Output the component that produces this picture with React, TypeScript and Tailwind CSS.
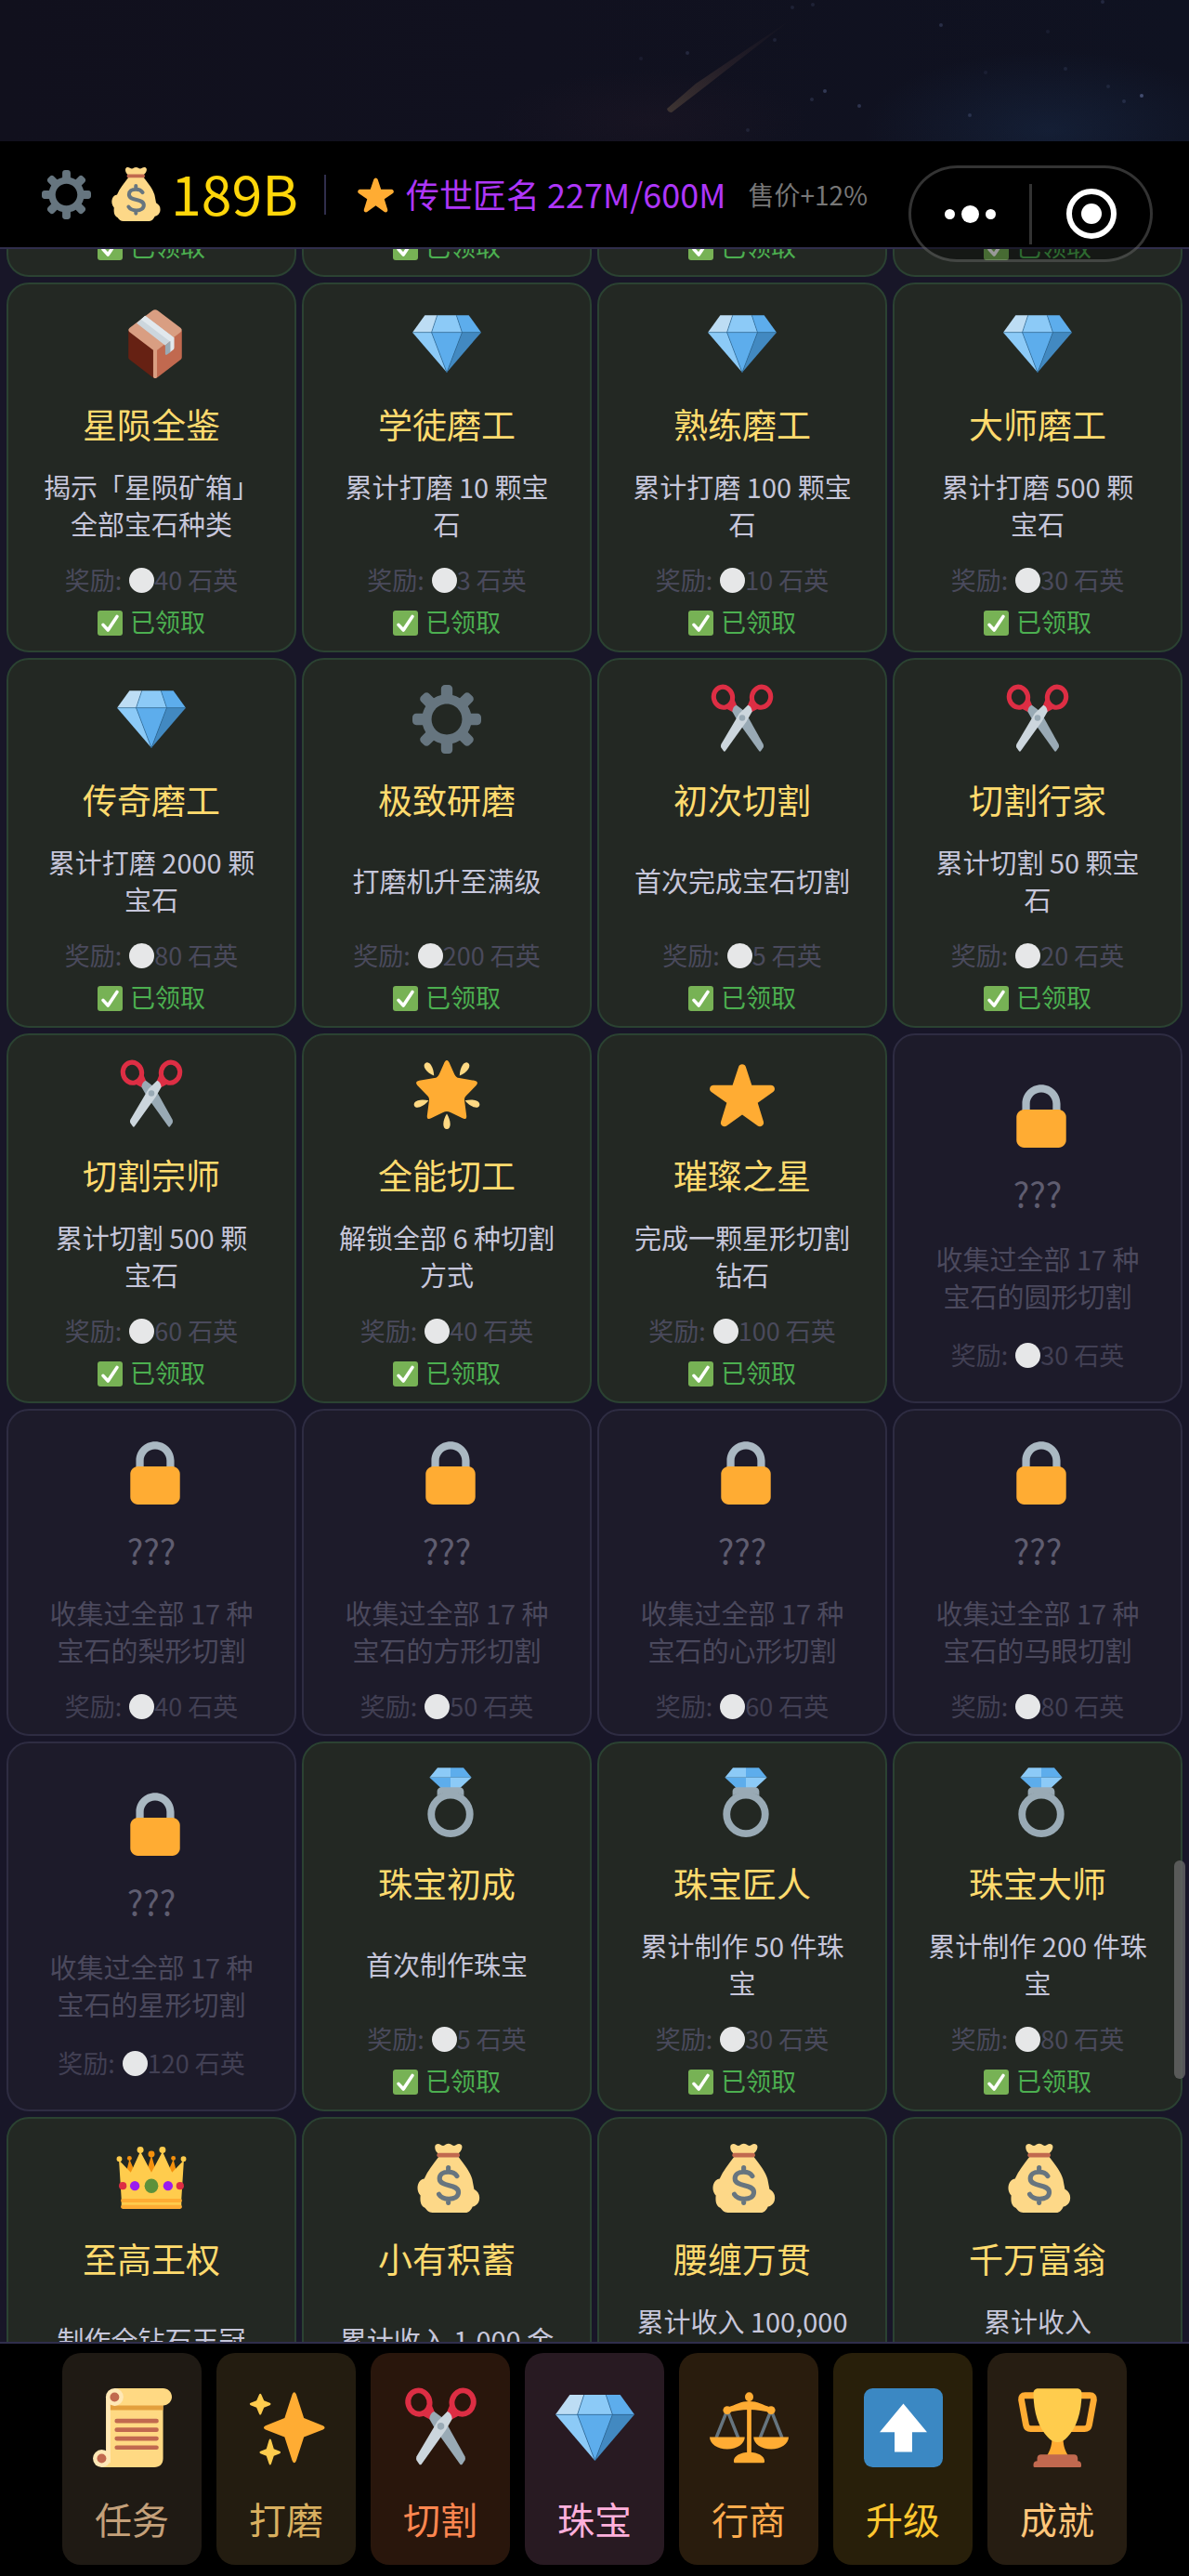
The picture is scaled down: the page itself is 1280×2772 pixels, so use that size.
import type { ReactNode } from 'react';

/* ---------- icons, all drawn on a 36 x 36 grid ---------- */

const Svg = ({ children }: { children: ReactNode }) => (
  <svg viewBox="0 0 36 36" className="block h-full w-full overflow-visible" aria-hidden="true">
    {children}
  </svg>
);

const Gear = () => (
  <Svg>
    <path
      fill="#66757F"
      d="M34 15h-3.362c-.324-1.369-.864-2.651-1.582-3.814l2.379-2.379c.781-.781.781-2.048 0-2.829l-1.414-1.414c-.781-.781-2.047-.781-2.828 0l-2.379 2.379C23.65 6.225 22.369 5.686 21 5.362V2c0-1.104-.896-2-2-2h-2c-1.104 0-2 .896-2 2v3.362c-1.369.324-2.651.864-3.814 1.582L8.808 4.565c-.781-.781-2.048-.781-2.828 0L4.565 5.979c-.781.781-.781 2.048-.001 2.829l2.379 2.379C6.225 12.35 5.686 13.632 5.362 15H2c-1.104 0-2 .896-2 2v2c0 1.104.896 2 2 2h3.362c.324 1.368.864 2.65 1.582 3.813l-2.379 2.379c-.78.78-.78 2.048.001 2.829l1.414 1.414c.78.78 2.047.78 2.828 0l2.379-2.379c1.163.719 2.445 1.258 3.814 1.582V34c0 1.104.896 2 2 2h2c1.104 0 2-.896 2-2v-3.362c1.368-.324 2.65-.864 3.813-1.582l2.379 2.379c.781.781 2.047.781 2.828 0l1.414-1.414c.781-.781.781-2.048 0-2.829l-2.379-2.379c.719-1.163 1.258-2.445 1.582-3.814H34c1.104 0 2-.896 2-2v-2C36 15.896 35.104 15 34 15zM18 26c-4.418 0-8-3.582-8-8s3.582-8 8-8 8 3.582 8 8-3.582 8-8 8z"
    />
  </Svg>
);

const Star = () => (
  <Svg>
    <path
      fill="#FFAC33"
      d="M27.287 34.627c-.404 0-.806-.124-1.152-.371L18 28.422l-8.135 5.834a1.97 1.97 0 0 1-1.151.371c-.409 0-.81-.127-1.143-.37a1.967 1.967 0 0 1-.711-2.193l3.034-9.792-8.063-5.681a1.976 1.976 0 0 1-.708-2.203 1.978 1.978 0 0 1 1.866-1.363L12.947 13l3.179-9.549a1.976 1.976 0 0 1 3.749 0L23 13l10.036.015a1.975 1.975 0 0 1 1.159 3.566l-8.062 5.681 3.034 9.792a1.97 1.97 0 0 1-1.88 2.573z"
    />
  </Svg>
);

const Gem = () => (
  <Svg>
    <path fill="#BDDDF4" d="M6.5 3H13l-3 9H0z" />
    <path fill="#8CCAF7" d="M13 3h10l3 9H10z" />
    <path fill="#5DADEC" d="M23 3h6.5L36 12H26z" />
    <path fill="#8CCAF7" d="M0 12h10l8 21z" />
    <path fill="#5DADEC" d="M10 12h16l-8 21z" />
    <path fill="#4289C1" d="M26 12h10L18 33z" />
    <path fill="none" stroke="#2A6797" strokeWidth=".3" d="M0 12h36M13 3l-3 9 8 21 8-21-3-9" />
  </Svg>
);

const Scissors = () => (
  <Svg>
    <g fill="none" stroke="#DD2E44" strokeWidth="2.5">
      <ellipse cx="8" cy="6.4" rx="4.9" ry="5.4" transform="rotate(-14 8 6.4)" />
      <ellipse cx="28" cy="6.4" rx="4.9" ry="5.4" transform="rotate(14 28 6.4)" />
    </g>
    <path fill="#DD2E44" d="M12 3.2l3.2 7.6-2.2 3.4-3.6-1.9c2-1 3.2-2.800 3.400-5z" />
    <path fill="#DD2E44" d="M24 3.200l-3.200 7.600 2.200 3.400 3.600-1.900c-2-1-3.200-2.800-3.400-5z" />
    <path fill="#99AAB5" d="M15 10.600c-1.200.4-2 1.600-2.200 3.400l3 5.200 11 15.400c.3.400.8.300 1 0l1.200-1.800c.3-.5.200-1.300 0-1.800L19.500 14z" />
    <path fill="#CCD6DD" d="M21 10.600c1.200.4 2 1.600 2.200 3.400l-3 5.200-11 15.400c-.3.400-.8.300-1 0L7 32.800c-.3-.5-.2-1.300 0-1.800L16.500 15z" />
    <circle cx="18" cy="17.300" r="1.600" fill="#99AAB5" />
  </Svg>
);

const ray = 'M18 28c1 1.600 1.800 3.600 1.800 5.400 0 1.700-.8 2.600-1.800 2.600s-1.800-.9-1.800-2.600c0-1.800.8-3.800 1.800-5.400z';

const GlowStar = () => (
  <Svg>
    <g fill="#FFD983">
      <path d={ray} />
      <path d={ray} transform="rotate(72 18 18)" />
      <path d={ray} transform="rotate(-72 18 18)" />
      <path d={ray} transform="rotate(146 18 18) translate(0 2)" />
      <path d={ray} transform="rotate(-146 18 18) translate(0 2)" />
    </g>
    <path
      fill="#FFAC33"
      d="M18 0c.7 0 1.200.9 1.500 1.700l2.500 5.600c.5 1.200 1.300 1.800 2.500 2l7.900 1.300c1.700.3 2.100 1.300 1 2.500l-5.200 5.400c-.9.9-1.100 1.700-.9 2.800l1 7.700c.200 1.700-.8 2.100-2.100 1.300l-6.300-3.100c-1.200-.6-2.600-.6-3.800 0l-6.300 3.100c-1.300.8-2.300.4-2.100-1.300l1-7.700c.2-1.100 0-1.900-.9-2.800l-5.200-5.400c-1.100-1.200-.7-2.200 1-2.500l7.900-1.300c1.200-.2 2-.8 2.500-2l2.500-5.600C16.800.9 17.300 0 18 0z"
    />
  </Svg>
);

const Lock = () => (
  <Svg>
    <path fill="#AAB8C2" d="M18 3C12.477 3 8 7.477 8 13v10h4V13c0-3.313 2.686-6 6-6s6 2.687 6 6v10h4V13c0-5.523-4.477-10-10-10z" />
    <path fill="#FFAC33" d="M31 32c0 2.209-1.791 4-4 4H9c-2.209 0-4-1.791-4-4V20c0-2.209 1.791-4 4-4h18c2.209 0 4 1.791 4 4v12z" />
  </Svg>
);

const Box = () => (
  <Svg>
    <path fill="#662113" d="M4 11l14 10.500V36c-.5 0-.9-.2-1.300-.5L4.800 26.400c-.5-.4-.8-.9-.8-1.500z" />
    <path fill="#C1694F" d="M32 11L18 21.500V36c.5 0 .9-.2 1.300-.5l11.900-9.100c.5-.4.8-.9.8-1.500z" />
    <path fill="#D99E82" d="M16.600.6c.9-.7 1.900-.7 2.800 0l11.900 9c.9.700.9 1.600 0 2.300L19 21.300V35c0 .6-.4 1-1 1s-1-.4-1-1V21.300L4.700 11.900c-.9-.7-.9-1.600 0-2.300z" />
    <path fill="#CCD6DD" d="M8.300 7.200l4.500-3.900 15.200 11.500-4.700 4z" />
    <path fill="#E1E8ED" d="M10.600 5.200l2.200-1.900L28 14.800V20c0 .5-.2.900-.6 1.200l-1.600 1.200v-5.600z" />
    <path fill="#99AAB5" d="M23.300 18.800l2.700-2.200v5.800l-1.700 1.200c-.6.400-1 .1-1-.5z" />
  </Svg>
);

const Ring = () => (
  <Svg>
    <circle cx="18" cy="24" r="10.100" fill="none" stroke="#99AAB5" strokeWidth="3.800" />
    <path fill="#8CCAF7" d="M11.200-.4H18V4.700H7z" />
    <path fill="#5DADEC" d="M18-.4h6.800L29 4.700H18z" />
    <path fill="#5DADEC" d="M7 4.700h11V10.500h-4.800z" />
    <path fill="#8CCAF7" d="M18 4.700h11l-6.200 5.800H18z" />
    <path fill="#99AAB5" d="M13.500 9.800h9c1.500 0 2.500 1 2.500 2.300v2.100c-4-2.200-10-2.200-14 0v-2.100c0-1.300 1-2.300 2.500-2.300z" />
  </Svg>
);

const Crown = () => (
  <Svg>
    <g fill="#F4900C">
      <path d="M6.500 8l3 7-5 1zM29.500 8l-3 7 5 1zM18 6l3.500 12h-7z" />
      <circle cx="6.500" cy="7.500" r="1.200" />
      <circle cx="29.500" cy="7.500" r="1.200" />
      <circle cx="18" cy="5.300" r="1.700" />
    </g>
    <path fill="#FFCC4D" d="M1 8.500L7.200 15 12.200 4 18 15l5.800-11 5 11L35 8.500 33.700 29v4.500H2.300V29z" />
    <g fill="#FFCC4D">
      <circle cx="1.200" cy="7.900" r="1.400" />
      <circle cx="34.800" cy="7.900" r="1.400" />
      <circle cx="12.200" cy="3.200" r="1.700" />
      <circle cx="23.800" cy="3.200" r="1.700" />
    </g>
    <rect x="2" y="28.700" width="32" height="2" rx="1" fill="#FFAC33" />
    <rect x="2" y="32" width="32" height="2" rx="1" fill="#FFAC33" />
    <ellipse cx="18" cy="22" rx="3.600" ry="3.800" fill="#5C913B" />
    <circle cx="9.300" cy="22" r="2.500" fill="#9B1CF0" />
    <circle cx="26.700" cy="22" r="2.500" fill="#9B1CF0" />
    <circle cx="3" cy="22" r="2" fill="#DD2E44" />
    <circle cx="33" cy="22" r="2" fill="#DD2E44" />
  </Svg>
);

const Bag = () => (
  <Svg>
    <path
      fill="#FDD888"
      d="M14 6.500h9.800c4 5 6.500 8.500 7.500 12l1 5.200c1.800 1 2.900 2.600 2.800 4.600 0 2.400-1.600 4.200-3.600 4.500-.9 1.900-2 3.200-3.700 3.200H10.500c-2 0-2.700-1-4-2.500C4.300 32.500 3.900 30 4.200 27 2.700 25.400 2.300 23 3 21c.5-1.500 1.800-2.600 3.200-2.700C8 14 10.800 10.800 14 6.500z"
    />
    <path fill="#FDD888" d="M13.400 5C12 3.700 11.700 2.500 11.800 1.300 12-.1 13.800-.3 14.800.5c1 .6 1.800.6 2.700-.2.8-.5 1.900-.5 2.700 0 .9.700 1.700.9 2.700.2 1.100-.8 2.900-.6 3.100.8.100 1.200-.5 2.400-1.900 3.700z" />
    <rect x="12.800" y="4.700" width="12" height="2.300" rx="1" fill="#C1694F" />
    <path
      fill="none"
      stroke="#67757F"
      strokeWidth="2.500"
      strokeLinecap="round"
      strokeLinejoin="round"
      d="M23.300 16.800c-.9-1.400-2.500-2.100-4.500-2.100-2.700 0-4.600 1.300-4.600 3.400 0 4.800 9.900 2.500 9.900 7.200 0 2.200-2 3.500-5 3.500-2.600 0-4.200-.8-5.200-2.400M18.800 12.400v2.300M18.800 28.800v2"
    />
  </Svg>
);

const Check = () => (
  <Svg>
    <rect width="36" height="36" rx="4" fill="#77B255" />
    <path fill="none" stroke="#fff" strokeWidth="4.800" strokeLinecap="round" strokeLinejoin="round" d="M8 20.500l7 7.500L28 8.500" />
  </Svg>
);

const Disc = () => (
  <Svg>
    <circle cx="18" cy="18" r="18" fill="#E6E7E8" />
  </Svg>
);

const Scroll = () => (
  <Svg>
    <path fill="#FFD983" d="M32 28V4H6v28c0 2-1 4-3 4h25c2.500 0 4-1.500 4-4z" />
    <path fill="#FFE8B6" d="M6 4h2v30H6z" />
    <path fill="#E39F3D" d="M8 6h24v3.900H8z" />
    <path fill="#FFD983" d="M10 0h22c2.200 0 4 1.800 4 3.900s-1.800 3.900-4 3.900H10z" />
    <circle cx="9.900" cy="4" r="4" fill="#FFE8B6" />
    <circle cx="9.900" cy="4" r="2.100" fill="#C1694F" />
    <circle cx="4" cy="32" r="4" fill="#FFE8B6" />
    <circle cx="4" cy="32" r="2.100" fill="#C1694F" />
    <path stroke="#C1694F" strokeWidth="2" strokeLinecap="round" d="M10.900 14.900H29M10.900 18.900H29M10.900 22.900H29M10.900 27H29" />
  </Svg>
);

const Sparkles = () => (
  <Svg>
    <path fill="#FFAC33" d="M20.600 2.800q.9-1.900 1.800 0l3.500 10.800 8.700 3.400q1.600.9 0 1.800l-8.700 3.400L22.400 33q-.9 1.900-1.800 0l-3.500-10.800-8.700-3.400q-1.600-.9 0-1.800l8.700-3.400z" />
    <path fill="#FFCC4D" d="M5.500 2.900q.5-1 1 0l1.200 2.700 2.700 1.100q.8.500 0 1L7.700 8.800l-1.200 2.800q-.5 1-1 0L4.300 8.800 1.600 7.700q-.8-.5 0-1l2.700-1.100zM10 23.600q.5-1 1 0l1.200 4 2.700 1.100q.8.500 0 1l-2.700 1.100-1.200 3.600q-.5 1-1 0l-1.200-3.600-2.700-1.100q-.8-.5 0-1l2.700-1.100z" />
  </Svg>
);

const Scales = () => (
  <Svg>
    <path fill="none" stroke="#66757F" strokeWidth="1.500" d="M8 10L3 22.500M8 10l5 12.500M28 10l-5 12.500M28 10l5 12.500" />
    <g fill="#FFAC33">
      <ellipse cx="18" cy="3.900" rx="1.900" ry="2.100" />
      <path d="M8 8.800c4-1.400 6.200-2.900 10-2.900s6 1.500 10 2.900v2.400c-6-2-14-2-20 0z" />
      <circle cx="8" cy="10" r="1.900" />
      <circle cx="28" cy="10" r="1.900" />
      <path d="M17 8h2v22h-2zM11 34v-1c0-2 3-3.900 7-3.900s7 1.900 7 3.900v.5q0 .5-.6.5H11.500q-.5 0-.5-.500z" />
      <path d="M0 22.200h16c0 3-3.500 5.500-8 5.500s-8-2.500-8-5.500zM20 22.200h16c0 3-3.500 5.500-8 5.500s-8-2.500-8-5.500z" />
    </g>
  </Svg>
);

const UpArrow = () => (
  <Svg>
    <rect width="36" height="36" rx="4" fill="#3B88C3" />
    <path fill="#fff" d="M18 7l10.800 13H22v9h-8v-9H7.200z" />
  </Svg>
);

const Trophy = () => (
  <Svg>
    <path
      fill="none"
      stroke="#FFAC33"
      strokeWidth="2.900"
      d="M9 3.300H3.200q-1.900 0-1.700 1.900L3.600 16.700q.3 1.800 2.100 1.800H13M27 3.300h5.800q1.900 0 1.700 1.900l-2.100 11.500q-.3 1.800-2.100 1.800H23"
    />
    <path fill="#FFAC33" d="M15.500 22h5c0 3.500.7 6 2.200 8.500h-9.400c1.500-2.500 2.200-5 2.200-8.500z" />
    <path fill="#FFCC4D" d="M7 2.200C7 .8 8 .1 9.300.1h17.400C28 .1 29 .8 29 2.200c0 9-2.500 16-6.500 20-2.800 3.200-6.200 3.200-9 0C9.500 18.200 7 11.200 7 2.200z" />
    <path fill="#C1694F" d="M10.500 30.200h15c1 0 1.700.7 1.700 1.700v1.200c1 0 1.600.6 1.600 1.600v.800q0 .5-.6.5H7.600q-.6 0-.6-.5v-.8c0-1 .7-1.600 1.700-1.600v-1.200c0-1 .7-1.700 1.800-1.700z" />
  </Svg>
);

/* ---------- data ---------- */

type Achievement = {
  icon: () => ReactNode;
  title: string;
  lines: string[];
  reward: number;
  locked?: boolean;
  /** shares its row with claimed cards, so the text block opens up a little */
  roomy?: boolean;
  /** glyph sits slightly right of the middle */
  nudge?: boolean;
};

const lock = (cut: string, reward: number, roomy = false): Achievement => ({
  icon: Lock,
  title: '???',
  lines: ['收集过全部 17 种', `宝石的${cut}切割`],
  reward,
  locked: true,
  roomy,
  nudge: true,
});

const achievements: Achievement[] = [
  { icon: Box, title: '星陨全鉴', lines: ['揭示「星陨矿箱」', '全部宝石种类'], reward: 40, nudge: true },
  { icon: Gem, title: '学徒磨工', lines: ['累计打磨 10 颗宝', '石'], reward: 3 },
  { icon: Gem, title: '熟练磨工', lines: ['累计打磨 100 颗宝', '石'], reward: 10 },
  { icon: Gem, title: '大师磨工', lines: ['累计打磨 500 颗', '宝石'], reward: 30 },
  { icon: Gem, title: '传奇磨工', lines: ['累计打磨 2000 颗', '宝石'], reward: 80 },
  { icon: Gear, title: '极致研磨', lines: ['打磨机升至满级'], reward: 200 },
  { icon: Scissors, title: '初次切割', lines: ['首次完成宝石切割'], reward: 5 },
  { icon: Scissors, title: '切割行家', lines: ['累计切割 50 颗宝', '石'], reward: 20 },
  { icon: Scissors, title: '切割宗师', lines: ['累计切割 500 颗', '宝石'], reward: 60 },
  { icon: GlowStar, title: '全能切工', lines: ['解锁全部 6 种切割', '方式'], reward: 40 },
  { icon: Star, title: '璀璨之星', lines: ['完成一颗星形切割', '钻石'], reward: 100 },
  lock('圆形', 30, true),
  lock('梨形', 40),
  lock('方形', 50),
  lock('心形', 60),
  lock('马眼', 80),
  lock('星形', 120, true),
  { icon: Ring, title: '珠宝初成', lines: ['首次制作珠宝'], reward: 5, nudge: true },
  { icon: Ring, title: '珠宝匠人', lines: ['累计制作 50 件珠', '宝'], reward: 30, nudge: true },
  { icon: Ring, title: '珠宝大师', lines: ['累计制作 200 件珠', '宝'], reward: 80, nudge: true },
  { icon: Crown, title: '至高王权', lines: ['制作全钻石王冠'], reward: 100 },
  { icon: Bag, title: '小有积蓄', lines: ['累计收入 1,000 金'], reward: 5 },
  { icon: Bag, title: '腰缠万贯', lines: ['累计收入 100,000', '金币'], reward: 30 },
  { icon: Bag, title: '千万富翁', lines: ['累计收入', '10,000,000 金币'], reward: 80 },
];

const tabs = [
  { icon: Scroll, label: '任务', tone: 'bg-[#1f1a14] text-[#c4a07a]' },
  { icon: Sparkles, label: '打磨', tone: 'bg-[#231c10] text-[#d9b060]' },
  { icon: Scissors, label: '切割', tone: 'bg-[#29160c] text-[#ff8650]' },
  { icon: Gem, label: '珠宝', tone: 'bg-[#281a22] text-[#ffb0dc]' },
  { icon: Scales, label: '行商', tone: 'bg-[#291c0d] text-[#ffac4e]' },
  { icon: UpArrow, label: '升级', tone: 'bg-[#281f0a] text-[#ffc730]' },
  { icon: Trophy, label: '成就', tone: 'bg-[#261d12] text-[#ffc67a]' },
];

/* ---------- parts ---------- */

const Claimed = () => (
  <p className="flex h-10 shrink-0 items-center justify-center gap-2 text-[27px] leading-10 text-[#4caf50]">
    <span className="size-[27px]">
      <Check />
    </span>
    <span className="pb-[2px]">已领取</span>
  </p>
);

const Card = ({ item }: { item: Achievement }) => {
  const Icon = item.icon;
  return (
    <article
      className={`flex flex-col items-center justify-center rounded-3xl border-2 pt-[27px] pb-[10px] text-center ${
        item.locked ? 'border-[#2e2c42] bg-[#1d1b2a]' : 'border-[#2b4232] bg-[#232823]'
      }`}
    >
      <div className={item.nudge ? 'pl-2' : ''}>
        <div className="size-[74px]">
          <Icon />
        </div>
      </div>
      <h2 className={`mt-[25px] text-[37px] leading-[48px] ${item.locked ? 'text-[#5f5d70]' : 'text-[#ffdb6e]'}`}>
        {item.title}
      </h2>
      <div
        className={`mt-[23px] flex flex-col justify-center text-[29px] leading-10 whitespace-nowrap ${
          item.roomy ? 'min-h-[86px]' : 'min-h-20'
        } ${item.locked ? 'text-[#4b495d]' : 'text-[#c6c6da]'}`}
      >
        {item.lines.map((line) => (
          <p key={line}>{line}</p>
        ))}
      </div>
      <p
        className={`mt-[21px] flex h-10 items-center text-[27px] leading-10 whitespace-pre ${
          item.locked ? 'text-[#424054]' : 'text-[#4a4a5c]'
        }`}
      >
        奖励:{' '}
        <span className="ml-[2px] size-[27px]">
          <Disc />
        </span>
        {item.reward} 石英
      </p>
      {!item.locked && (
        <div className="mt-[6px]">
          <Claimed />
        </div>
      )}
    </article>
  );
};

const skyStars = [
  [853, 8, 0.15], [875, 5, 0.15], [1013, 27, 0.25], [740, 57, 0.2], [888, 98, 0.35], [925, 114, 0.3],
  [874, 107, 0.2], [1044, 124, 0.25], [1229, 103, 0.5], [1193, 93, 0.15], [1210, 109, 0.2], [1147, 74, 0.15],
  [1128, 34, 0.1], [1187, 2, 0.2], [834, 43, 0.15], [1061, 78, 0.1], [690, 63, 0.1], [805, 140, 0.15],
];

const Sky = () => (
  <div className="h-[152px] shrink-0 bg-[#0f1221] bg-[linear-gradient(90deg,#11101d_0%,#11111f_45%,#10112a00_100%)]">
    <svg viewBox="0 0 1280 152" preserveAspectRatio="xMidYMid slice" className="block h-full w-full" aria-hidden="true">
      <defs>
        <linearGradient id="trail" x1="0" y1="1" x2="1" y2="0">
          <stop offset="0" stopColor="#4c4038" stopOpacity=".75" />
          <stop offset=".5" stopColor="#3a2c30" stopOpacity=".45" />
          <stop offset="1" stopColor="#3a2c30" stopOpacity="0" />
        </linearGradient>
        <radialGradient id="blueHaze">
          <stop offset="0" stopColor="#1c3356" stopOpacity=".38" />
          <stop offset="1" stopColor="#1c3356" stopOpacity="0" />
        </radialGradient>
        <radialGradient id="redHaze">
          <stop offset="0" stopColor="#3a2230" stopOpacity=".16" />
          <stop offset="1" stopColor="#3a2230" stopOpacity="0" />
        </radialGradient>
      </defs>
      <ellipse cx="1130" cy="140" rx="200" ry="85" fill="url(#blueHaze)" />
      <ellipse cx="700" cy="130" rx="170" ry="55" fill="url(#redHaze)" />
      <path fill="url(#trail)" d="M718 117q1 4 5 4l30-23 100-78-104 70z" />
      {skyStars.map(([x, y, o]) => (
        <circle key={`${x}-${y}`} cx={x} cy={y} r="2" fill="#7383b8" opacity={o} />
      ))}
    </svg>
  </div>
);

const Capsule = () => (
  <div className="absolute top-[178px] right-[39px] flex h-[104px] w-[263px] items-center rounded-full border-[3px] border-white/20 bg-black/40">
    <button type="button" aria-label="更多" className="flex h-full flex-1 items-center justify-center gap-[7px]">
      <span className="size-[11px] rounded-full bg-white" />
      <span className="size-[19px] rounded-full bg-white" />
      <span className="size-[11px] rounded-full bg-white" />
    </button>
    <span className="h-[65px] w-[3px] bg-white/20" />
    <button type="button" aria-label="关闭" className="flex h-full flex-1 items-center justify-center">
      <span className="flex size-[54px] items-center justify-center rounded-full border-[6px] border-white">
        <span className="size-[22px] rounded-full bg-white" />
      </span>
    </button>
  </div>
);

export default function App() {
  return (
    <div className="relative flex h-screen min-h-[900px] flex-col overflow-hidden bg-[#181628] font-['Noto_Sans_CJK_SC',sans-serif]">
      <Sky />

      <header className="flex h-[116px] shrink-0 items-center border-b-2 border-[#302e4c] bg-black pl-[45px] whitespace-nowrap">
        <button type="button" aria-label="设置" className="size-[53px]">
          <Gear />
        </button>
        <span className="ml-[18px] size-[58px]">
          <Bag />
        </span>
        <strong className="ml-[10px] pb-1 text-[59px] leading-[64px] font-normal text-[#ffd60a]">189B</strong>
        <span className="ml-[28px] h-[43px] w-[2px] bg-[#302e4c]" />
        <span className="ml-[33px] size-[41px]">
          <Star />
        </span>
        <span className="ml-[12px] pb-[2px] text-[36px] leading-[48px] text-[#ae36fa]">传世匠名 227M/600M</span>
        <span className="ml-6 text-[28px] leading-[48px] text-[#777777]">售价+12%</span>
      </header>

      <main className="relative min-h-0 flex-1 overflow-hidden">
        <div className="grid grid-cols-4 gap-[6px] px-[7px]">
          {['a', 'b', 'c', 'd'].map((key) => (
            <div
              key={key}
              className="flex h-[30px] flex-col justify-end overflow-hidden rounded-b-3xl border-2 border-t-0 border-[#2b4232] bg-[#232823] pb-[10px]"
            >
              <Claimed />
            </div>
          ))}
          {achievements.map((item) => (
            <Card key={item.title + item.lines.join('')} item={item} />
          ))}
        </div>
        <span className="absolute top-[1734px] right-1 h-[235px] w-3 rounded-full bg-[#666666]/80" />
      </main>

      <nav className="flex shrink-0 justify-center gap-4 border-t-2 border-[#302e4c] bg-black pt-[10px] pb-3">
        {tabs.map(({ icon: Icon, label, tone }) => (
          <button
            key={label}
            type="button"
            className={`flex w-[150px] flex-col items-center rounded-[20px] pt-[38px] pb-[26px] text-[40px] leading-[48px] ${tone}`}
          >
            <span className="mb-[31px] size-[85px]">
              <Icon />
            </span>
            {label}
          </button>
        ))}
      </nav>

      <Capsule />
    </div>
  );
}
